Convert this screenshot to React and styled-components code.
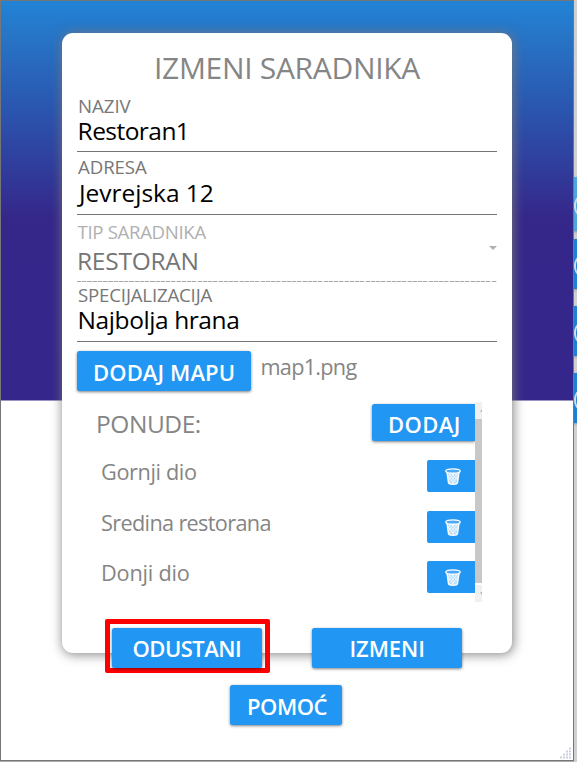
import React from 'react';
import styled, { createGlobalStyle } from 'styled-components';

const Global = createGlobalStyle`
  * { box-sizing: border-box; }
  body {
    margin: 0;
    overflow: hidden;
    font-family: 'Open Sans', 'Noto Sans', sans-serif;
    background: #cfcfcf;
  }
`;

const Desktop = styled.div`
  display: flex;
  width: 577px;
  height: 762px;
  background: #adadad;
`;

const Window = styled.main`
  position: relative;
  width: 574px;
  height: 761px;
  border: 1px solid #747678;
  padding: 32px 61px 0;
  background: linear-gradient(#2183d5 0, #2776c8 32px, #2a57b0 105px, #35278a 217px, #34268a 399px, #fff 400px);
`;

const Card = styled.section`
  width: 450px;
  height: 620px;
  padding: 15px 15px 0;
  border-radius: 11px;
  background: #fff;
  box-shadow: 1px 1px 11px 1px rgba(120, 120, 120, 0.85);
`;

const Text = styled.span`
  display: block;
  white-space: nowrap;
  letter-spacing: ${(p) => p.$track || 0}px;
`;

const Title = styled.h1`
  margin: 0 0 8px;
  padding-left: 77px;
  font-size: 30px;
  font-weight: 400;
  line-height: 40px;
  letter-spacing: -0.31px;
  white-space: nowrap;
  color: #858585;
`;

const Field = styled.div`
  height: ${(p) => p.$height}px;
  margin-bottom: ${(p) => p.$after}px;
  border-bottom: 1px solid #757575;
`;

const SelectField = styled(Field)`
  display: flex;
  justify-content: space-between;
  border-bottom: 0;
  background: repeating-linear-gradient(90deg, #a8a8a8 0 4px, #e4e4e4 4px 5.25px) bottom / 100% 1px no-repeat;
`;

const Label = styled(Text)`
  padding-left: ${(p) => (p.$muted ? 0.5 : 1)}px;
  font-size: 18.67px;
  line-height: 20px;
  color: ${(p) => (p.$muted ? '#b0b0b0' : '#777')};
`;

const Value = styled(Text)`
  margin-top: ${(p) => p.$top || 0}px;
  padding-left: ${(p) => p.$indent || 0}px;
  font-size: 24.5px;
  line-height: 30px;
  color: ${(p) => (p.$muted ? '#757575' : '#000')};
`;

const Caret = styled.svg`
  display: block;
  width: 8px;
  height: 4px;
  margin-top: 24px;
`;

const Button = styled.button`
  flex: none;
  width: ${(p) => p.$width}px;
  height: ${(p) => p.$height || 40}px;
  padding: ${(p) => p.$top ?? 2}px 0 0 ${(p) => p.$left}px;
  border: 0;
  border-radius: ${(p) => p.$radius || '2.5px'};
  background: #2196f3;
  box-shadow: 0 1px 3px rgba(0, 0, 0, 0.5);
  color: #fff;
  font-family: inherit;
  font-size: 22px;
  font-weight: 600;
  line-height: 36px;
  letter-spacing: ${(p) => p.$track || 0}px;
  text-align: left;
  white-space: nowrap;
`;

const ButtonLabel = styled.span`
  display: block;
  height: 36px;
  margin-bottom: ${(p) => p.$lift || 0}px;
`;

const MapRow = styled.div`
  display: flex;
  gap: 9.5px;
  height: 51px;
`;

const Body = styled(Text)`
  font-size: 21.7px;
  line-height: 30px;
  color: #858585;
`;

const MapName = styled(Body)`
  padding-top: 1px;
`;

const Offers = styled.div`
  display: flex;
  width: 405px;
  height: 200px;
  overflow: hidden;
`;

const OfferList = styled.div`
  flex: 1;
  padding: 2px 0 0 19px;
`;

const OfferHead = styled.div`
  display: flex;
  justify-content: space-between;
  height: 56px;
`;

const OfferTitle = styled(Text)`
  padding-top: 4px;
  font-size: 24.5px;
  line-height: 32px;
  color: #858585;
`;

const Offer = styled.div`
  display: flex;
  justify-content: space-between;
  height: 50.5px;
  padding-left: 5px;
`;

const OfferName = styled(Body)`
  margin-top: ${(p) => p.$drop}px;
`;

const IconButton = styled.button`
  display: flex;
  justify-content: center;
  width: 48px;
  height: 32px;
  padding: 8px 0 0 4px;
  border: 0;
  border-radius: 2px 0 0 2px;
  background: #2196f3;
`;

const ScrollBar = styled.div`
  display: flex;
  flex-direction: column;
  width: 7px;
`;

const ScrollEnd = styled.div`
  display: flex;
  align-items: center;
  justify-content: flex-end;
  height: 17px;
  background: #f0f0f0;
`;

const Thumb = styled.div`
  height: 164px;
  margin-bottom: 2px;
  background: #c8c8c8;
`;

const Actions = styled.div`
  display: flex;
  gap: 42px;
  margin: 17px 0 0 28px;
`;

const Highlight = styled.div`
  width: 165px;
  height: 54px;
  padding: 4px 2px;
  border: 5px solid #f00;
  border-radius: 2px;
`;

const PlainAction = styled.div`
  padding-top: 9px;
`;

const HelpRow = styled.div`
  display: flex;
  padding: 12px 0 0 153px;
`;

const Grip = styled.svg`
  position: absolute;
  right: 1px;
  bottom: 1px;
  width: 12px;
  height: 12px;
`;

const Strip = styled.aside`
  width: 3px;
  height: 762px;
  overflow: hidden;
  background: #d0d0d0;
  padding-top: 177px;
`;

const Tab = styled.div`
  display: flex;
  align-items: center;
  width: 3px;
  height: ${(p) => p.$height}px;
  margin-bottom: ${(p) => p.$after}px;
  background: ${(p) => (p.$light ? '#4fa5dc' : '#1f7fd0')};
  box-shadow: 0 1px 3px #777;
`;

const Mark = styled.div`
  flex: none;
  width: 10px;
  height: 18px;
  margin-top: 3px;
  border: 2px solid #d5dce2;
  border-radius: 50%;
`;

function Trash() {
  return (
    <svg width="16" height="17" viewBox="0 0 16 17" fill="none" stroke="#fff">
      <path d="M2 4.2 3.5 14.6Q3.8 16.2 8 16.2T12.5 14.6L14 4.2" strokeWidth="1.4" fill="#fff" fillOpacity="0.65" />
      <ellipse cx="8" cy="3.1" rx="7.2" ry="2.2" strokeWidth="1.4" fill="#4da9f5" />
      <path
        d="m3 8 6 7M4 5.8l7.5 8.7M7.2 6l5.3 6M10.5 6l3 3M13 8l-6 7M12 5.8 4.5 14.5M8.8 6l-5.3 6M5.5 6l-3 3"
        strokeWidth="0.9"
        strokeOpacity="0.85"
      />
    </svg>
  );
}

const offers = [
  { name: 'Gornji dio', track: -0.38, drop: -3 },
  { name: 'Sredina restorana', track: -0.66, drop: -2.5 },
  { name: 'Donji dio', track: -0.2, drop: -3 },
];

export default function App() {
  return (
    <Desktop>
      <Global />
      <Window>
        <Card>
          <Title>IZMENI SARADNIKA</Title>
          <Field $height={56} $after={5}>
            <Label $track={-0.03}>NAZIV</Label>
            <Value $track={-0.55} $indent={0.6}>Restoran1</Value>
          </Field>
          <Field $height={58} $after={7}>
            <Label $track={-0.1}>ADRESA</Label>
            <Value $track={-0.02} $indent={2} $top={0.5}>Jevrejska 12</Value>
          </Field>
          <SelectField $height={60} $after={3}>
            <div>
              <Label $muted $track={-0.35}>TIP SARADNIKA</Label>
              <Value $muted $track={-0.25} $top={4}>RESTORAN</Value>
            </div>
            <Caret viewBox="0 0 8 4"><path d="M0 0h8L4 4z" fill="#b0b0b0" /></Caret>
          </SelectField>
          <Field $height={57} $after={9}>
            <Label $track={-0.18}>SPECIJALIZACIJA</Label>
            <Value $track={-0.42} $indent={0.6}>Najbolja hrana</Value>
          </Field>
          <MapRow>
            <Button $width={174} $left={16} $track={0.1}><ButtonLabel $lift={1}>DODAJ MAPU</ButtonLabel></Button>
            <MapName $track={-0.74}>map1.png</MapName>
          </MapRow>
          <Offers>
            <OfferList>
              <OfferHead>
                <OfferTitle $track={-0.45}>PONUDE:</OfferTitle>
                <Button $width={103} $height={37} $left={16} $track={0.4} $radius="2.5px 0 0 2.5px">
                  <ButtonLabel>DODAJ</ButtonLabel>
                </Button>
              </OfferHead>
              {offers.map((o) => (
                <Offer key={o.name}>
                  <OfferName $track={o.track} $drop={o.drop}>{o.name}</OfferName>
                  <IconButton aria-label="Obriši"><Trash /></IconButton>
                </Offer>
              ))}
            </OfferList>
            <ScrollBar>
              <ScrollEnd><svg width="2" height="3"><path d="M0 3 2 0v3z" fill="#b5b5b5" /></svg></ScrollEnd>
              <Thumb />
              <ScrollEnd><svg width="2" height="3"><path d="M0 0 2 3V0z" fill="#b5b5b5" /></svg></ScrollEnd>
            </ScrollBar>
          </Offers>
          <Actions>
            <Highlight>
              <Button $width={150} $top={0} $left={20.5} $track={-0.51}><ButtonLabel $lift={1}>ODUSTANI</ButtonLabel></Button>
            </Highlight>
            <PlainAction>
              <Button $width={150} $top={0} $left={37.5} $track={-0.1}><ButtonLabel $lift={1}>IZMENI</ButtonLabel></Button>
            </PlainAction>
          </Actions>
          <HelpRow>
            <Button $width={112} $left={17} $track={-0.48}><ButtonLabel $lift={1}>POMOĆ</ButtonLabel></Button>
          </HelpRow>
        </Card>
        <Grip viewBox="0 0 12 12" fill="#ccd0df">
          {[0, 1, 2, 3].flatMap((r) =>
            [0, 1, 2, 3].filter((c) => c + r >= 3).map((c) => (
              <rect key={`${r}-${c}`} x={c * 3} y={r * 3 + 0.5} width="2" height="2" />
            ))
          )}
        </Grip>
      </Window>
      <Strip>
        <Tab $light $height={54} $after={8}><Mark /></Tab>
        <Tab $height={50} $after={17}><Mark /></Tab>
        <Tab $height={50} $after={17}><Mark /></Tab>
        <Tab $height={50} $after={0}><Mark /></Tab>
      </Strip>
    </Desktop>
  );
}
